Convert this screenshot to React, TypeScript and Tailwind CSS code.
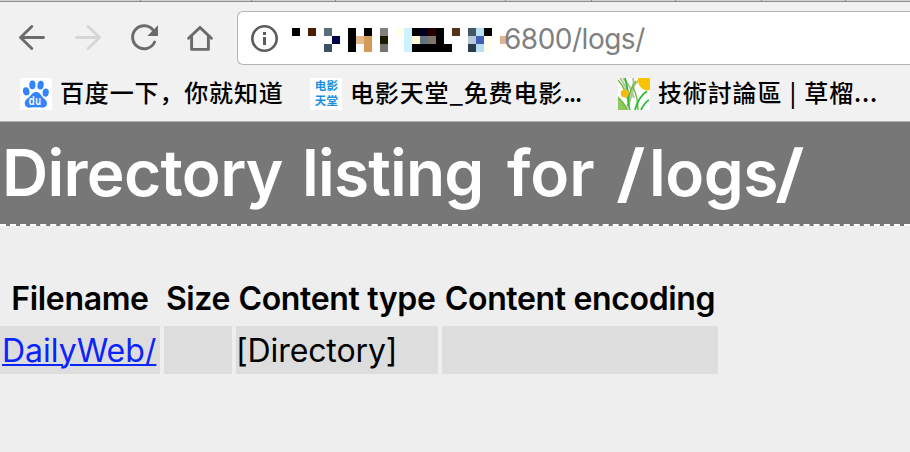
import React from "react";

const tabEdges = [140, 251, 335, 505, 591, 675, 761, 845];

// [x, y, width, height, colour] of each block of the pixelated host name
const blocks: [number, number, number, number, string][] = [
  [0, 0, 8, 8, "#000000"],
  [16, 0, 8, 8, "#4a1c00"],
  [32, 0, 8, 8, "#5a6c76"],
  [40, 8, 8, 8, "#00004c"],
  [32, 16, 8, 8, "#3d5260"],
  [56, 0, 8, 24, "#000000"],
  [64, 8, 8, 8, "#e0bb88"],
  [72, 0, 8, 8, "#000000"],
  [72, 8, 8, 16, "#d49a58"],
  [88, 0, 8, 8, "#858079"],
  [88, 8, 8, 8, "#1a1a00"],
  [88, 16, 8, 8, "#75746f"],
  [104, 0, 8, 8, "#ffffec"],
  [112, 0, 8, 24, "#ccf2ff"],
  [120, 0, 8, 8, "#000000"],
  [128, 0, 8, 8, "#00001e"],
  [136, 0, 8, 8, "#270000"],
  [144, 0, 8, 16, "#000000"],
  [120, 8, 8, 8, "#fff8d4"],
  [128, 8, 8, 8, "#617480"],
  [136, 8, 8, 8, "#80756b"],
  [120, 16, 40, 8, "#000000"],
  [160, 0, 8, 8, "#523315"],
  [176, 0, 8, 8, "#445766"],
  [184, 0, 8, 8, "#b9dff2"],
  [192, 0, 8, 8, "#000000"],
  [176, 8, 8, 8, "#b8c8d9"],
  [184, 8, 8, 8, "#405eb4"],
  [192, 8, 8, 16, "#fffff0"],
  [176, 16, 8, 8, "#293d4d"],
  [184, 16, 8, 8, "#b9dff2"],
  [208, 8, 6, 8, "#deb393"],
];

function NavIcons() {
  return (
    <svg width="237" height="64" viewBox="0 0 237 64" fill="none" className="shrink-0" strokeLinecap="round">
      <g transform="translate(0 -2)">
        <path d="M43.5 37.5H20.5M31.8 26.5L20.5 37.5L31.8 48.5" stroke="#6b6b6b" strokeWidth="2.9" strokeLinejoin="round" />
        <path d="M76.5 37.5H99.5M88.2 26.5L99.5 37.5L88.2 48.5" stroke="#d6d6d6" strokeWidth="2.9" strokeLinejoin="round" />
        <path d="M153.3 30.3A11.5 11.5 0 1 0 154.6 42" stroke="#6b6b6b" strokeWidth="2.9" />
        <path d="M158 25.3V36H147.3Z" fill="#6b6b6b" />
        <path d="M188.6 38.2L200 27.4L211.4 38.2" stroke="#6b6b6b" strokeWidth="2.9" />
        <path d="M191.6 37V49.4H208.4V37" stroke="#6b6b6b" strokeWidth="2.9" strokeLinejoin="round" />
      </g>
    </svg>
  );
}

function InfoIcon() {
  return (
    <svg width="28" height="28" viewBox="0 0 28 28" fill="none" className="shrink-0">
      <circle cx="14.5" cy="14.5" r="12.2" stroke="#5c5c5c" strokeWidth="2.6" />
      <path d="M13 8h3v3h-3zM13 13h3v8h-3z" fill="#5c5c5c" />
    </svg>
  );
}

function BaiduIcon() {
  return (
    <svg width="32" height="32" viewBox="0 0 32 32" className="shrink-0">
      <rect width="32" height="32" fill="#fff" />
      <g fill="#3385ff">
        <ellipse cx="6.2" cy="13.3" rx="3.2" ry="4.1" transform="rotate(-12 6.2 13.3)" />
        <ellipse cx="12.4" cy="6.9" rx="3.1" ry="4.4" />
        <ellipse cx="20.6" cy="7.2" rx="3.1" ry="4.4" transform="rotate(10 20.6 7.2)" />
        <ellipse cx="25.7" cy="14.6" rx="3.1" ry="4.2" transform="rotate(5 25.7 14.6)" />
        <path d="M16 14C12.500 14 11.500 17 9 19.200C6.500 21.200 4.500 22.500 4.800 25.700C5.100 29 8 30 11 29.600C14.500 29.100 17.500 29.100 21 29.600C24 30 27 28.800 27 25.500C27 22.300 24.500 21.200 22.500 19C20.500 16.500 19.500 14 16 14Z" />
      </g>
      <text x="8.8" y="27" fill="#fff" fontSize="11.5" fontWeight="600" fontFamily="Inter, sans-serif" textLength="13" lengthAdjust="spacingAndGlyphs">du</text>
    </svg>
  );
}

function MovieIcon() {
  return (
    <div className="flex size-8 shrink-0 flex-col items-center bg-white pl-px text-[11.5px]/[15px] font-bold tracking-[0.2px] text-[#1c8fe0]">
      <span>电影</span>
      <span>天堂</span>
    </div>
  );
}

function GrassIcon() {
  return (
    <svg width="32" height="32" viewBox="0 0 32 32" fill="none" className="shrink-0">
      <rect width="32" height="32" fill="#fff" />
      <path d="M0 18C4 22 8 27 10 32H0Z" fill="#8fc763" />
      <path d="M2 0C6 5 9 11 10 20M21 2C14 8 11 18 11 32M15 0C17 9 13 21 9 30M5 0C9 4 14 11 16 20" stroke="#b4c79a" strokeWidth="2" />
      <path d="M0 2C5 7 9 14 12 32M15 9C18 15 20 22 20 32M0 20C5 23 7 27 9 32M18 3C13 9 11 15 10 24" stroke="#6cb846" strokeWidth="1.400" />
      <path d="M7 0C9 9 12 18 10 28M29 13C22 18 19 24 17 32M31 22C27 24 25 28 23 32" stroke="#2fba3c" strokeWidth="1.800" />
      <path d="M20 0H32V12C25 13.500 19 8 20 0Z" fill="#f8c400" />
      <circle cx="6.800" cy="15.600" r="4" fill="#f7b90b" />
    </svg>
  );
}

export default function App() {
  return (
    <div className="flex h-[452px] w-[910px] flex-col overflow-hidden bg-[#eeeeee] font-['Inter','Noto_Sans_CJK_SC',sans-serif] text-black">
      <div className="relative h-[2px] shrink-0 border-b border-[#8d8d8d] bg-[#d2d2d2]">
        {tabEdges.map((x) => (
          <span key={x} className="absolute top-0 h-px w-px bg-[#8d8d8d]" style={{ left: x }} />
        ))}
      </div>

      <div className="flex h-[64px] shrink-0 bg-[#f1f1f1]">
        <NavIcons />
        <div className="mt-[9px] flex h-[54px] flex-1 items-center rounded-l-[6px] border border-r-0 border-[#b4b4b4] bg-white pl-[12px]">
          <InfoIcon />
          <svg width="214" height="24" viewBox="0 0 214 24" shapeRendering="crispEdges" className="mt-[16px] ml-[14px] shrink-0 self-start">
            {blocks.map(([x, y, w, h, fill], i) => (
              <rect key={i} x={x} y={y} width={w} height={h} fill={fill} />
            ))}
          </svg>
          <span className="-ml-[2px] pt-[2px] text-[28px] tracking-[-0.5px] text-[#808080]">6800/logs/</span>
        </div>
      </div>

      <div className="flex h-[56px] shrink-0 items-center border-b border-[#b2b5b4] bg-[#f1f1f1] pl-[20px] font-['Noto_Sans_CJK_SC',sans-serif] text-[24px] font-medium tracking-[0.85px] whitespace-nowrap">
        <BaiduIcon />
        <span className="ml-[8px] w-[250px] pb-[4px]">百度一下，你就知道</span>
        <MovieIcon />
        <span className="ml-[8px] w-[268px] pb-[4px]">电影天堂_免费电影<span className="tracking-[-1.2px]">...</span></span>
        <GrassIcon />
        <span className="ml-[8px] pb-[4px] font-['Noto_Sans_CJK_TC',sans-serif] [word-spacing:1px]">技術討論區 | 草榴...</span>
      </div>

      <h1 className="flex h-[104px] shrink-0 items-center border-b-2 border-dashed border-white bg-[#777777] pl-[2px] text-[64px] font-semibold whitespace-pre text-white">
        <span className="w-[300px] tracking-[-0.7px]">Directory </span>
        <span className="w-[205px] tracking-[-0.8px]">listing </span>
        <span className="w-[109px]">for </span>
        <span className="w-[33px] origin-left scale-x-[1.22]">/</span>
        <span className="w-[126px] tracking-[-0.5px]">logs</span>
        <span className="origin-left scale-x-[1.22]">/</span>
      </h1>

      <div className="mt-[48px] grid grid-cols-[160px_68px_202px_276px] grid-rows-[48px_48px] gap-1 text-[32px] whitespace-nowrap">
        {["Filename", "Size", "Content type", "Content encoding"].map((label) => (
          <div key={label} className="flex items-center justify-center pt-[2px] font-semibold tracking-[-0.35px]">{label}</div>
        ))}
        <div className="flex items-center bg-[#dddddd] pt-[2px] pl-[2px]">
          <a href="#" className="text-[#0b24fb] underline decoration-2 underline-offset-2">DailyWeb/</a>
        </div>
        <div className="bg-[#dddddd]" />
        <div className="flex items-center bg-[#dddddd] pt-[2px] tracking-[-0.1px]">[Directory]</div>
        <div className="bg-[#dddddd]" />
      </div>
    </div>
  );
}
